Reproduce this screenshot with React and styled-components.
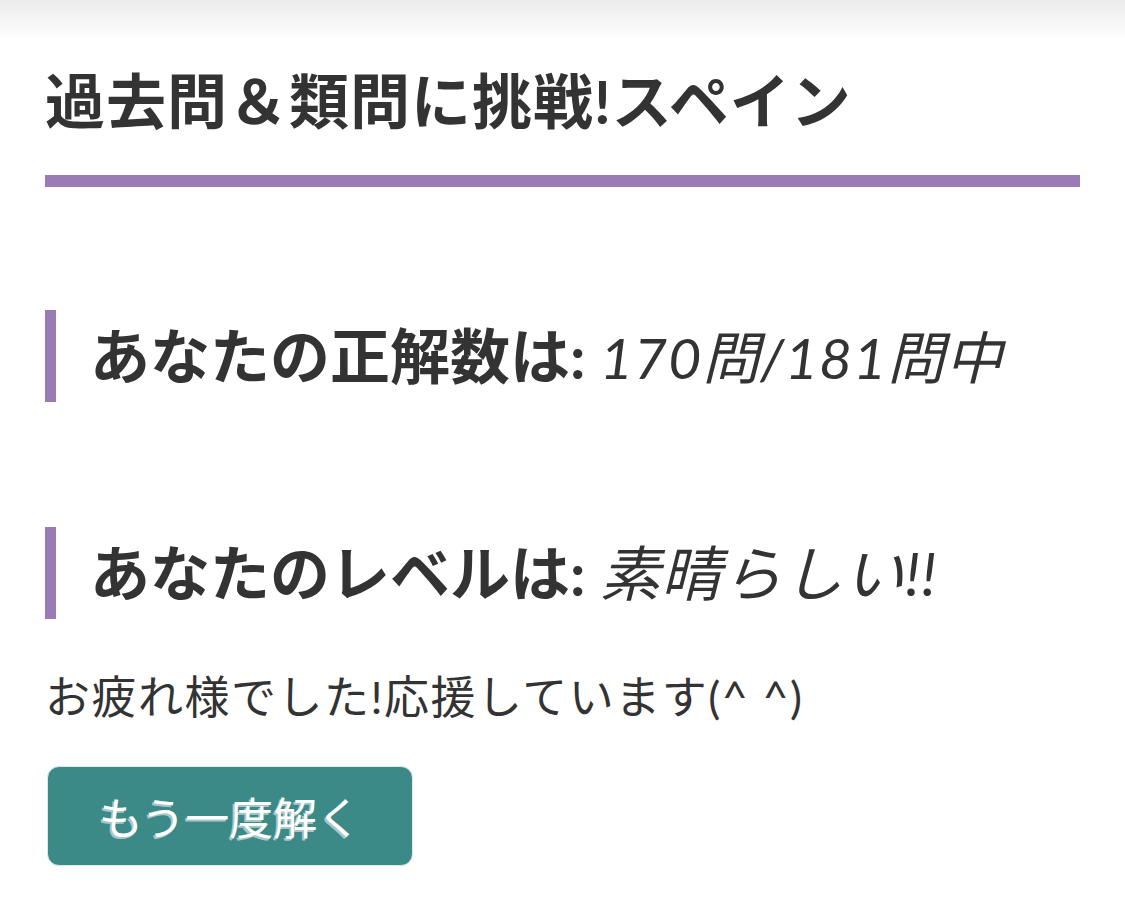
import React from 'react';
import styled, { createGlobalStyle } from 'styled-components';

const GlobalStyle = createGlobalStyle`
  html, body {
    margin: 0;
    padding: 0;
    background: #ffffff;
  }
  body {
    font-family: "Lato", "Noto Sans CJK JP", sans-serif;
    color: #333333;
  }
`;

const TopShade = styled.div`
  height: 40px;
  background: linear-gradient(to bottom, #ebebeb, #ffffff);
`;

const Page = styled.main`
  padding: 0 45px;
`;

const Title = styled.h1`
  margin: 19px 0 0;
  padding: 0 0 32px;
  font-size: 60px;
  line-height: 1.4;
  font-weight: 700;
  letter-spacing: 1px;
  border-bottom: 12px solid #9a7bb6;
`;

const ResultHeading = styled.h2`
  margin: ${({ $top }) => $top}px 0 0;
  padding: 7px 0 7px 34px;
  border-left: 11px solid #9a7bb6;
  font-size: 60px;
  line-height: 1.3;
  font-weight: 700;
`;

const Value = styled.span`
  font-weight: 400;
  font-style: italic;
  font-size: ${({ $size }) => $size || 60}px;
  letter-spacing: ${({ $spacing }) => $spacing || 0}px;
`;

const Message = styled.p`
  margin: 42px 0 0;
  font-size: 45px;
  line-height: 1.6;
  letter-spacing: 1.5px;
`;

const RetryButton = styled.button`
  margin-top: 33px;
  margin-left: 2px;
  width: 366px;
  height: 100px;
  padding: 0;
  border: 1px solid #dcecec;
  border-radius: 12px;
  background: #3c8a88;
  color: #ffffff;
  font-family: "Lato", "Noto Sans CJK JP", sans-serif;
  font-size: 44px;
  font-weight: 400;
  text-shadow: -2px 2px 0 #a9c6c6;
  cursor: pointer;
`;

export default function App() {
  return (
    <>
      <GlobalStyle />
      <TopShade />
      <Page>
        <Title>過去問＆類問に挑戦!スペイン</Title>
        <ResultHeading $top={123}>
          あなたの正解数は: <Value $size={57} $spacing={1}>170問/181問中</Value>
        </ResultHeading>
        <ResultHeading $top={125}>
          あなたのレベルは: <Value $spacing={1}>素晴らしい!!</Value>
        </ResultHeading>
        <Message>お疲れ様でした!応援しています(^ ^)</Message>
        <RetryButton type="button">もう一度解く</RetryButton>
      </Page>
    </>
  );
}
